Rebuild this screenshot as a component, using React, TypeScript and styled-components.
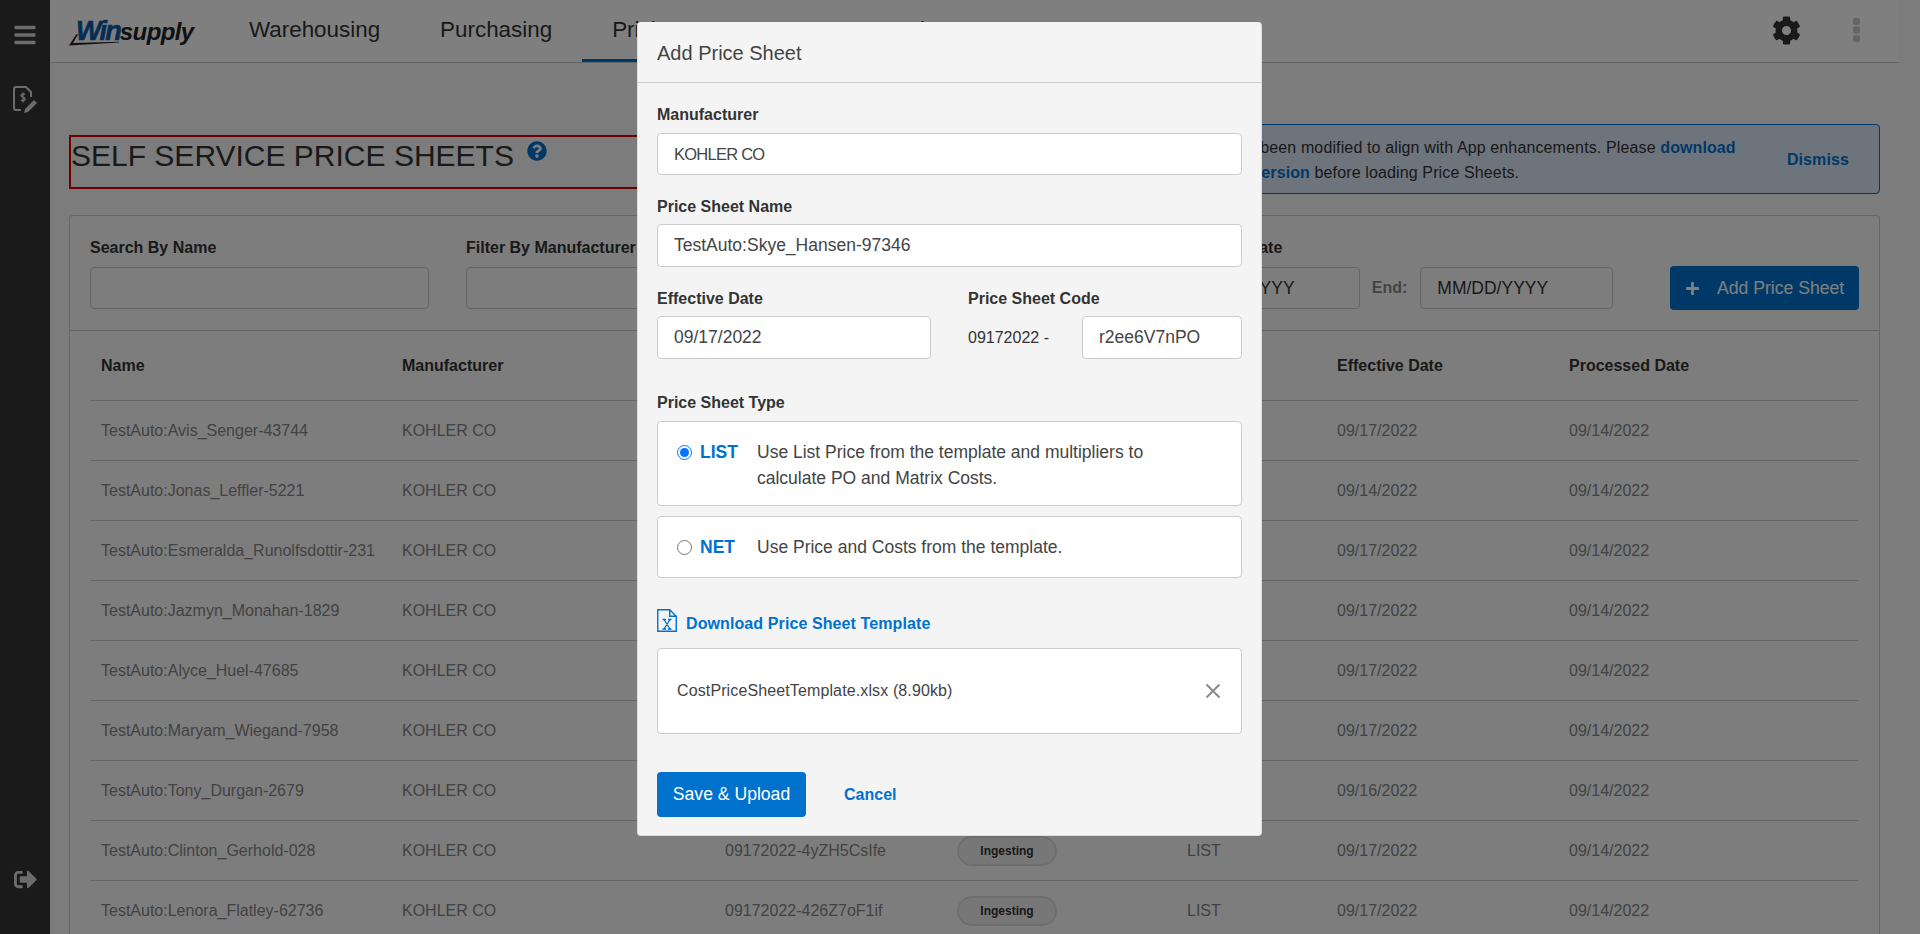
import React from "react";
import styled, { createGlobalStyle } from "styled-components";
import { FaBars, FaCog, FaQuestionCircle, FaSignOutAlt, FaPlus } from "react-icons/fa";

const GlobalStyle = createGlobalStyle`
  html, body {
    margin: 0;
    height: 100%;
    overflow: hidden;
  }
  body {
    font-family: "Liberation Sans", Arial, sans-serif;
    font-size: 16px;
    color: #333;
    background: #f9f9f9;
  }
  * {
    box-sizing: border-box;
  }
`;

const Shell = styled.div`
  display: flex;
  height: 934px;
  overflow: hidden;
`;

const Sidebar = styled.aside`
  flex: 0 0 50px;
  display: flex;
  flex-direction: column;
  align-items: center;
  gap: 39px;
  padding: 23px 0 43px;
  background: #343434;
  color: #d8d8d8;
`;

const SidebarBottom = styled.div`
  margin-top: auto;
  display: flex;
`;

const Main = styled.main`
  flex: 1;
  min-width: 0;
`;

const Header = styled.header`
  width: 1849px;
  height: 63px;
  display: flex;
  align-items: flex-start;
  padding: 0 39px 0 19px;
  background: #fff;
  border-bottom: 1px solid #ccc;
`;

const Logo = styled.div`
  position: relative;
  flex: 0 0 131px;
  height: 62px;
  padding: 15px 0 0 7px;
  font-style: italic;
  font-weight: 700;
  line-height: 32px;
  white-space: nowrap;
`;

const LogoWin = styled.span`
  font-size: 27px;
  letter-spacing: -1.8px;
  color: #0a5ba8;
  -webkit-text-stroke: 0.6px #0a5ba8;
`;

const LogoSupply = styled.span`
  font-size: 24px;
  letter-spacing: -0.6px;
  color: #222;
`;

const LogoSwoosh = styled.svg`
  position: absolute;
  left: 0;
  top: 33px;
`;

const Nav = styled.nav`
  display: flex;
  margin-left: 19px;
`;

const NavItem = styled.a<{ $active?: boolean }>`
  height: 62px;
  padding: 0 30px;
  font-size: 22.4px;
  line-height: 60px;
  color: #333;
  border-bottom: 3px solid ${(p) => (p.$active ? "#0072ce" : "transparent")};
`;

const HeaderActions = styled.div`
  margin-left: auto;
  display: flex;
  align-items: center;
  gap: 52px;
  height: 60px;
  color: #333;
`;

const Content = styled.div`
  padding: 61px 40px 0 19px;
`;

const TitleRow = styled.div`
  display: flex;
  height: 70px;
`;

const TitleBox = styled.div`
  flex: 0 0 900px;
  height: 54px;
  margin-top: 11px;
  display: flex;
  align-items: flex-start;
  border: 2px solid #e00000;
`;

const Title = styled.h1`
  margin: 0;
  padding: 1px 0 0;
  font-size: 30px;
  font-weight: 400;
  line-height: 36px;
  color: #333;
`;

const HelpIcon = styled(FaQuestionCircle)`
  margin: 4px 0 0 13px;
  color: #0072ce;
  font-size: 20px;
`;

const Alert = styled.div`
  flex: 1;
  margin-left: 68px;
  display: flex;
  align-items: center;
  padding: 1px 30px 0 18px;
  background: #dce8f8;
  border: 1px solid #0072ce;
  border-radius: 4px;
`;

const AlertText = styled.p`
  margin: 0;
  width: 696px;
  line-height: 25px;
  letter-spacing: 0.13px;
`;

const AlertLink = styled.a`
  font-weight: 700;
  color: #0072ce;
  letter-spacing: 0.1px;
`;

const Dismiss = styled(AlertLink)`
  margin-left: auto;
`;

const Card = styled.section`
  margin-top: 21px;
  background: #fbfbfb;
  border: 1px solid #ccc;
  border-bottom: 0;
  border-radius: 4px 4px 0 0;
`;

const Filters = styled.div`
  display: flex;
  align-items: flex-end;
  gap: 37px;
  height: 115px;
  padding: 0 20px 21px;
  border-bottom: 1px solid #ccc;
`;

const FilterGroup = styled.div<{ $width: number }>`
  flex: 0 0 ${(p) => p.$width}px;
`;

const FilterLabel = styled.div`
  margin-bottom: 9px;
  font-weight: 700;
  line-height: 20px;
  white-space: nowrap;
`;

const TextInput = styled.input`
  display: block;
  width: 100%;
  height: 42px;
  padding: 0 16px;
  font-family: inherit;
  font-size: 17.5px;
  color: #333;
  background: transparent;
  border: 1px solid #ccc;
  border-radius: 4px;
  outline: none;
`;

const DateRow = styled.div`
  display: flex;
  align-items: center;
`;

const DateCaption = styled.span`
  margin: 0 13px 0 12px;
  font-weight: 700;
  color: #888;
  &:first-child {
    margin-left: 0;
    margin-right: 17px;
  }
`;

const DateInput = styled(TextInput)`
  flex: 0 0 193px;
  width: 193px;
`;

const AddButton = styled.button`
  margin: 0 0 -1px auto;
  flex: 0 0 189px;
  height: 44px;
  display: flex;
  align-items: center;
  gap: 17px;
  padding: 0 0 0 15px;
  font-family: inherit;
  font-size: 17.6px;
  color: #fff;
  background: #0072ce;
  border: 0;
  border-radius: 4px;
`;

const Table = styled.div`
  margin: 0 21px 0 20px;
`;

const TableRow = styled.div<{ $head?: boolean }>`
  display: grid;
  grid-template-columns: 301px 323px 232px 230px 150px 232px 300px;
  align-items: center;
  height: ${(p) => (p.$head ? "70px" : "60px")};
  border-bottom: 1px solid #ccc;
  font-weight: ${(p) => (p.$head ? 700 : 400)};
  color: ${(p) => (p.$head ? "#333" : "#858585")};
`;

const Cell = styled.div`
  padding-left: 11px;
  white-space: nowrap;
`;

const Pill = styled.span`
  display: block;
  width: 100px;
  margin-left: 11px;
  height: 30px;
  font-size: 12px;
  font-weight: 700;
  line-height: 26px;
  text-align: center;
  color: #333;
  background: #eee;
  border: 2px solid #ddd;
  border-radius: 15px;
`;

const Overlay = styled.div`
  position: fixed;
  inset: 0;
  display: flex;
  justify-content: center;
  align-items: flex-start;
  padding: 22px 21px 0 0;
  background: rgba(0, 0, 0, 0.5);
`;

const Modal = styled.div`
  width: 625px;
  height: 814px;
  background: #f4f4f4;
  border: 1px solid #ddd;
  border-top: 0;
  border-radius: 4px;
`;

const ModalHeader = styled.h2`
  margin: 0;
  height: 61px;
  padding: 0 19px;
  font-size: 20px;
  font-weight: 400;
  line-height: 62px;
  color: #444;
  border-bottom: 1px solid #ccc;
`;

const ModalBody = styled.div`
  padding: 21px 19px 0;
`;

const FieldLabel = styled.label`
  display: block;
  margin-bottom: 7px;
  padding-top: 1px;
  font-weight: 700;
  line-height: 20px;
`;

const Field = styled.div`
  margin-bottom: 21px;
`;

const ModalInput = styled.input<{ $width?: number }>`
  display: block;
  width: ${(p) => (p.$width ? `${p.$width}px` : "100%")};
  height: 43px;
  padding: 0 16px;
  font-family: inherit;
  font-size: 17.5px;
  color: #444;
  background: #fff;
  border: 1px solid #ccc;
  border-radius: 4px;
  outline: none;
`;

const SelectBox = styled(ModalInput)`
  height: 42px;
  margin-top: 8px;
  font-size: 16.5px;
  letter-spacing: -0.75px;
`;

const TwoColumns = styled.div`
  display: flex;
  gap: 37px;
`;

const CodeRow = styled.div`
  display: flex;
  align-items: center;
  justify-content: space-between;
  width: 274px;
`;

const TypeLabel = styled(FieldLabel)`
  margin: 33px 0 8px;
`;

const OptionCard = styled.div<{ $height: number }>`
  display: flex;
  height: ${(p) => p.$height}px;
  margin-bottom: 10px;
  padding: 17px 19px 0;
  background: #fff;
  border: 1px solid #ccc;
  border-radius: 4px;
`;

const Radio = styled.input`
  flex: 0 0 15px;
  width: 15px;
  height: 15px;
  margin: 6px 8px 0 0;
`;

const OptionName = styled.span`
  flex: 0 0 57px;
  font-size: 17.5px;
  font-weight: 700;
  line-height: 26px;
  color: #0072ce;
`;

const OptionText = styled.span`
  width: 400px;
  font-size: 17.5px;
  line-height: 26px;
  color: #444;
`;

const DownloadLink = styled.a`
  display: flex;
  align-items: center;
  gap: 9px;
  height: 23px;
  margin: 31px 0 16px;
  font-weight: 700;
  color: #0072ce;
`;

const DownloadText = styled.span`
  margin-top: 6px;
  letter-spacing: 0.1px;
`;

const FileBox = styled.div`
  display: flex;
  align-items: center;
  justify-content: space-between;
  height: 86px;
  padding: 0 20px 0 19px;
  color: #444;
  background: #fff;
  border: 1px solid #ccc;
  border-radius: 4px;
`;

const FileName = styled.span`
  letter-spacing: 0.12px;
`;

const ModalActions = styled.div`
  display: flex;
  align-items: center;
  gap: 38px;
  margin-top: 38px;
`;

const SaveButton = styled.button`
  width: 149px;
  height: 45px;
  padding: 0;
  font-family: inherit;
  font-size: 17.6px;
  color: #fff;
  background: #0072ce;
  border: 0;
  border-radius: 4px;
`;

const CancelLink = styled.a`
  font-weight: 700;
  color: #0072ce;
`;

const rows = [
  ["TestAuto:Avis_Senger-43744", "09172022-7hKd2PqLs", "Ingesting", "09/17/2022"],
  ["TestAuto:Jonas_Leffler-5221", "09142022-Xa91TfGmc", "Ingesting", "09/14/2022"],
  ["TestAuto:Esmeralda_Runolfsdottir-231", "09172022-p3VnR8sYw", "Ingesting", "09/17/2022"],
  ["TestAuto:Jazmyn_Monahan-1829", "09172022-Mb6JzQe2o", "Ingesting", "09/17/2022"],
  ["TestAuto:Alyce_Huel-47685", "09172022-c0WtU5hNa", "Ingesting", "09/17/2022"],
  ["TestAuto:Maryam_Wiegand-7958", "09172022-Ly4GxE7Kd", "Ingesting", "09/17/2022"],
  ["TestAuto:Tony_Durgan-2679", "09162022-s8DqI1vBr", "Ingesting", "09/16/2022"],
  ["TestAuto:Clinton_Gerhold-028", "09172022-4yZH5CsIfe", "Ingesting", "09/17/2022"],
  ["TestAuto:Lenora_Flatley-62736", "09172022-426Z7oF1if", "Ingesting", "09/17/2022"],
];

const PriceDocIcon = () => (
  <svg width="24" height="28" viewBox="0 0 24 28" fill="none" stroke="currentColor">
    <path d="M8 24H3a2 2 0 0 1-2-2V3a2 2 0 0 1 2-2h10l5 5v5" strokeWidth="2" />
    <path d="M12 8.500c-1-1-4-1-4 .8 0 2.200 4.200 1.400 4.200 3.800 0 2-3.200 2-4.400.8M10 6.500v10" strokeWidth="1.400" />
    <path d="M11 27l1-4 9-9 3 3-9 9z" fill="currentColor" stroke="none" />
  </svg>
);

const DotsIcon = () => (
  <svg width="7" height="24" viewBox="0 0 7 24" fill="#c8c8c8">
    <rect width="7" height="7" rx="2" />
    <rect y="8.500" width="7" height="7" rx="2" />
    <rect y="17" width="7" height="7" rx="2" />
  </svg>
);

const ExcelDocIcon = () => (
  <svg width="20" height="23" viewBox="0 0 20 23" fill="none" stroke="#0072ce">
    <path d="M.75.75h12l6.500 6.500v15h-18.500zM12.750.75v6.500h6.500" strokeWidth="1.400" />
    <path d="M5.500 10.500h3.500M11 10.500h3.500M5.500 20h3.500M11 20h3.500M7 10.500l6 9.500M13 10.500l-6 9.500" strokeWidth="1.300" />
  </svg>
);

const CloseIcon = () => (
  <svg width="16" height="16" viewBox="0 0 16 16" stroke="#8c8c8c" strokeWidth="2">
    <path d="M1.500 1.500l13 13M14.500 1.500l-13 13" />
  </svg>
);

export default function App() {
  return (
    <>
      <GlobalStyle />
      <Shell>
        <Sidebar>
          <FaBars size={24} />
          <PriceDocIcon />
          <SidebarBottom>
            <FaSignOutAlt size={23} />
          </SidebarBottom>
        </Sidebar>
        <Main>
          <Header>
            <Logo>
              <LogoWin>Win</LogoWin>
              <LogoSupply>supply</LogoSupply>
              <LogoSwoosh width="52" height="13" viewBox="0 0 52 13" fill="#222">
                <path d="M0 12.500L7.500 1 9 1.500 4 10l46-1.300v.8z" />
              </LogoSwoosh>
            </Logo>
            <Nav>
              <NavItem>Warehousing</NavItem>
              <NavItem>Purchasing</NavItem>
              <NavItem $active>Pricing</NavItem>
              <NavItem>Inventory</NavItem>
              <NavItem>Sales</NavItem>
            </Nav>
            <HeaderActions>
              <FaCog size={29} />
              <DotsIcon />
            </HeaderActions>
          </Header>
          <Content>
            <TitleRow>
              <TitleBox>
                <Title>SELF SERVICE PRICE SHEETS</Title>
                <HelpIcon />
              </TitleBox>
              <Alert>
                <AlertText>
                  A Price Sheet Template has been modified to align with App enhancements. Please{" "}
                  <AlertLink>download the most recent template version</AlertLink> before loading Price Sheets.
                </AlertText>
                <Dismiss>Dismiss</Dismiss>
              </Alert>
            </TitleRow>
            <Card>
              <Filters>
                <FilterGroup $width={339}>
                  <FilterLabel>Search By Name</FilterLabel>
                  <TextInput readOnly />
                </FilterGroup>
                <FilterGroup $width={339}>
                  <FilterLabel>Filter By Manufacturer</FilterLabel>
                  <TextInput readOnly />
                </FilterGroup>
                <FilterGroup $width={229}>
                  <FilterLabel>Filter By Status</FilterLabel>
                  <TextInput readOnly />
                </FilterGroup>
                <div>
                  <FilterLabel>Filter By Effective Date</FilterLabel>
                  <DateRow>
                    <DateCaption>Start:</DateCaption>
                    <DateInput readOnly value="MM/DD/YYYY" />
                    <DateCaption>End:</DateCaption>
                    <DateInput readOnly value="MM/DD/YYYY" />
                  </DateRow>
                </div>
                <AddButton>
                  <FaPlus size={15} />
                  Add Price Sheet
                </AddButton>
              </Filters>
              <Table>
                <TableRow $head>
                  <Cell>Name</Cell>
                  <Cell>Manufacturer</Cell>
                  <Cell>Code</Cell>
                  <Cell>Status</Cell>
                  <Cell>Type</Cell>
                  <Cell>Effective Date</Cell>
                  <Cell>Processed Date</Cell>
                </TableRow>
                {rows.map((row) => (
                  <TableRow key={row[0]}>
                    <Cell>{row[0]}</Cell>
                    <Cell>KOHLER CO</Cell>
                    <Cell>{row[1]}</Cell>
                    <div>
                      <Pill>{row[2]}</Pill>
                    </div>
                    <Cell>LIST</Cell>
                    <Cell>{row[3]}</Cell>
                    <Cell>09/14/2022</Cell>
                  </TableRow>
                ))}
              </Table>
            </Card>
          </Content>
        </Main>
      </Shell>
      <Overlay>
        <Modal>
          <ModalHeader>Add Price Sheet</ModalHeader>
          <ModalBody>
            <Field>
              <FieldLabel>Manufacturer</FieldLabel>
              <SelectBox readOnly value="KOHLER CO" />
            </Field>
            <Field>
              <FieldLabel>Price Sheet Name</FieldLabel>
              <ModalInput readOnly value="TestAuto:Skye_Hansen-97346" />
            </Field>
            <TwoColumns>
              <div>
                <FieldLabel>Effective Date</FieldLabel>
                <ModalInput $width={274} readOnly value="09/17/2022" />
              </div>
              <div>
                <FieldLabel>Price Sheet Code</FieldLabel>
                <CodeRow>
                  <span>09172022 -</span>
                  <ModalInput $width={160} readOnly value="r2ee6V7nPO" />
                </CodeRow>
              </div>
            </TwoColumns>
            <TypeLabel>Price Sheet Type</TypeLabel>
            <OptionCard $height={85}>
              <Radio type="radio" name="type" defaultChecked />
              <OptionName>LIST</OptionName>
              <OptionText>
                Use List Price from the template and multipliers to calculate PO and Matrix Costs.
              </OptionText>
            </OptionCard>
            <OptionCard $height={62}>
              <Radio type="radio" name="type" />
              <OptionName>NET</OptionName>
              <OptionText>Use Price and Costs from the template.</OptionText>
            </OptionCard>
            <DownloadLink>
              <ExcelDocIcon />
              <DownloadText>Download Price Sheet Template</DownloadText>
            </DownloadLink>
            <FileBox>
              <FileName>CostPriceSheetTemplate.xlsx (8.90kb)</FileName>
              <CloseIcon />
            </FileBox>
            <ModalActions>
              <SaveButton>Save &amp; Upload</SaveButton>
              <CancelLink>Cancel</CancelLink>
            </ModalActions>
          </ModalBody>
        </Modal>
      </Overlay>
    </>
  );
}
